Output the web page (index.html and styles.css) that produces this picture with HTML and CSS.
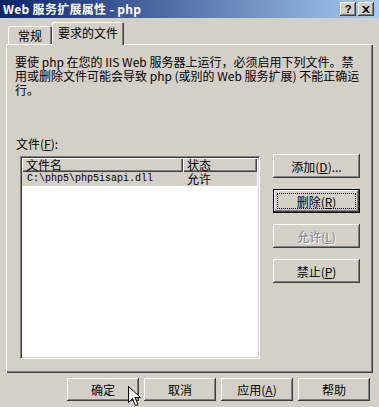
FILE: index.html
```html
<!DOCTYPE html>
<html lang="zh-CN">
<head>
<meta charset="utf-8">
<title>Web 服务扩展属性 - php</title>
<link rel="stylesheet" href="styles.css">
</head>
<body>
<div class="window">
  <div class="titlebar">
    <span class="title">Web 服务扩展属性 - php</span>
    <span class="tb-btn help">?</span>
    <span class="tb-btn close">
      <svg width="8" height="7" viewBox="0 0 8 7"><path d="M0 0h2l2 2 2-2h2L5 3.5 8 7H6L4 5 2 7H0l3-3.5z" fill="#000"/></svg>
    </span>
  </div>
  <div class="tabs">
    <div class="tab">常规</div>
    <div class="tab active">要求的文件</div>
  </div>
  <div class="panel">
    <p class="desc">要使 php 在您的 IIS Web 服务器上运行，必须启用下列文件。禁<br>用或删除文件可能会导致 php (或别的 Web 服务扩展) 不能正确运<br>行。</p>
    <div class="files-label">文件(<u>F</u>):</div>
    <div class="files">
      <div class="listbox">
        <div class="list-head">
          <div class="col c1">文件名</div>
          <div class="col c2">状态</div>
        </div>
        <div class="list-row">
          <div class="cell c1 mono">C:\php5\php5isapi.dll</div>
          <div class="cell c2">允许</div>
        </div>
      </div>
      <div class="side">
        <div class="btn">添加(<u>D</u>)...</div>
        <div class="btn focused"><span class="focus">删除(<u>R</u>)</span></div>
        <div class="btn disabled">允许(<u>L</u>)</div>
        <div class="btn">禁止(<u>P</u>)</div>
      </div>
    </div>
  </div>
  <div class="footer">
    <div class="btn wide">确定</div>
    <div class="btn wide">取消</div>
    <div class="btn wide">应用(<u>A</u>)</div>
    <div class="btn wide">帮助</div>
  </div>
</div>
<svg class="cursor" width="13" height="21" viewBox="0 0 13 21"><path d="M0.5 0.5v16l4-4 3 7 2.5-1-3-7h5.5z" fill="#fff" stroke="#000" stroke-width="1"/></svg>
</body>
</html>
```
FILE: styles.css
```css
html, body {
  margin: 0;
  padding: 0;
}
body {
  width: 379px;
  height: 407px;
  overflow: hidden;
  position: relative;
  background: #d4d0c8;
  color: #000;
  font-family: "Noto Sans CJK SC", "Liberation Sans", sans-serif;
  font-size: 12px;
  line-height: 13px;
}
.window {
  display: flex;
  flex-direction: column;
  height: 407px;
}
.titlebar {
  height: 18px;
  display: flex;
  align-items: center;
  padding: 0 5px 0 3px;
  background: linear-gradient(to right, #0a246a, #a6caf0);
  color: #fff;
  font-weight: bold;
}
.title {
  flex: 1;
  line-height: 18px;
  white-space: nowrap;
  letter-spacing: 0.3px;
}
.tb-btn {
  width: 16px;
  height: 14px;
  box-sizing: border-box;
  display: flex;
  align-items: center;
  justify-content: center;
  background: #d4d0c8;
  color: #000;
  font-family: "Liberation Sans", sans-serif;
  font-size: 11px;
  font-weight: bold;
  box-shadow: inset -1px -1px #404040, inset 1px 1px #fff, inset -2px -2px #808080;
}
.tb-btn.close {
  margin-left: 2px;
}
.tabs {
  height: 26px;
  display: flex;
  align-items: flex-end;
  padding-left: 8px;
  position: relative;
  z-index: 2;
}
.tab {
  height: 18px;
  width: 44px;
  box-sizing: border-box;
  display: flex;
  align-items: center;
  justify-content: center;
  background: #d4d0c8;
  border-radius: 2px 2px 0 0;
  box-shadow: inset 1px 1px #fff, inset -1px 0 #404040, inset -2px 0 #808080;
  white-space: nowrap;
}
.tab.active {
  height: 23px;
  width: 72px;
  margin-bottom: -1px;
  padding-bottom: 2px;
}
.panel {
  height: 329px;
  margin: 0 6px;
  box-sizing: border-box;
  padding: 11px 0 0 9px;
  box-shadow: inset 1px 1px #fff, inset -1px -1px #404040, inset -2px -2px #808080;
  position: relative;
  z-index: 1;
}
.desc {
  margin: 0;
  white-space: nowrap;
  line-height: 14px;
}
.files-label {
  margin-top: 40px;
  padding-left: 1px;
  line-height: 14px;
}
.files {
  display: flex;
  margin-top: 5px;
  padding-left: 5px;
}
.listbox {
  width: 240px;
  height: 203px;
  box-sizing: border-box;
  padding: 2px;
  background: #fff;
  box-shadow: inset 1px 1px #808080, inset -1px -1px #fff, inset 2px 2px #404040, inset -2px -2px #d4d0c8;
}
.list-head {
  display: flex;
  height: 14px;
}
.col {
  height: 14px;
  box-sizing: border-box;
  padding-left: 4px;
  background: #d4d0c8;
  box-shadow: inset 1px 1px #fff, inset -1px -1px #404040, inset -2px -2px #808080;
  line-height: 14px;
  white-space: nowrap;
}
.c1 {
  width: 161px;
}
.c2 {
  width: 74px;
}
.list-row {
  display: flex;
  height: 14px;
  background: #d4d0c8;
  margin-right: 1px;
}
.cell {
  box-sizing: border-box;
  padding-left: 4px;
  line-height: 14px;
  white-space: nowrap;
}
.mono {
  font-family: "Liberation Mono", monospace;
  font-size: 10px;
  padding-left: 5px;
}
.side {
  display: flex;
  flex-direction: column;
  gap: 11px;
  margin-left: 13px;
  margin-top: -2px;
}
.btn {
  width: 87px;
  height: 24px;
  box-sizing: border-box;
  display: flex;
  align-items: center;
  justify-content: center;
  background: #d4d0c8;
  box-shadow: inset -1px -1px #404040, inset 1px 1px #fff, inset -2px -2px #808080;
  white-space: nowrap;
}
.btn.focused {
  box-shadow: inset 0 0 0 1px #000, inset -2px -2px #404040, inset 2px 2px #fff, inset -3px -3px #808080;
  padding: 4px;
}
.focus {
  flex: 1;
  align-self: stretch;
  display: flex;
  align-items: center;
  justify-content: center;
  border: 1px dotted #000;
}
.btn.disabled {
  color: #808080;
  text-shadow: 1px 1px #fff;
}
.footer {
  flex: 1;
  display: flex;
  justify-content: flex-end;
  align-items: flex-start;
  gap: 5px;
  padding: 5px 9px 0 0;
}
.btn.wide {
  width: 72px;
  height: 23px;
}
.cursor {
  position: absolute;
  left: 128px;
  top: 386px;
}
```
